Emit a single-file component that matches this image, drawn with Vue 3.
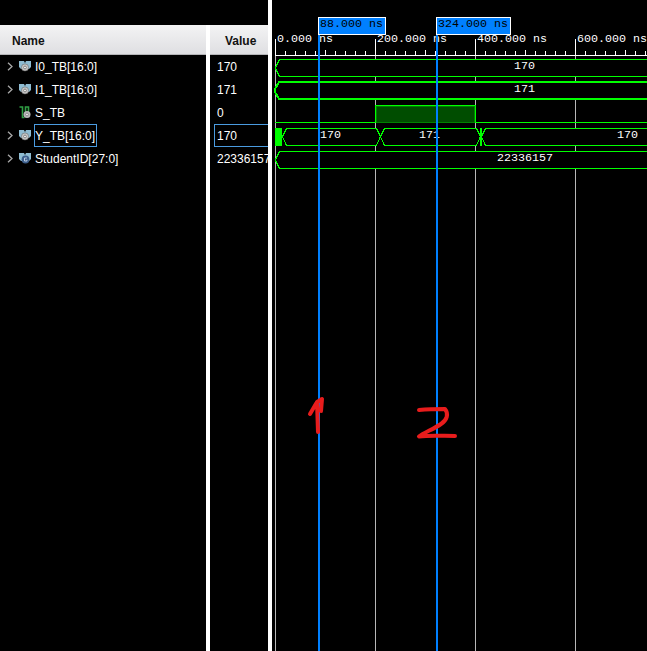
<script setup>
const signals = [
  { name: 'I0_TB[16:0]', value: '170', icon: 'bus' },
  { name: 'I1_TB[16:0]', value: '171', icon: 'bus' },
  { name: 'S_TB', value: '0', icon: 'wire' },
  { name: 'Y_TB[16:0]', value: '170', icon: 'bus', selected: true },
  { name: 'StudentID[27:0]', value: '22336157', icon: 'generic' }
]

const majors = [
  { x: 275, label: '0.000 ns' },
  { x: 375, label: '200.000 ns' },
  { x: 475, label: '400.000 ns' },
  { x: 575, label: '600.000 ns' }
]
const minors = []
for (let i = 1; i < 38; i++) {
  if (i % 10) minors.push({ x: 275 + i * 10, y: i % 5 ? 51 : 50 })
}

const values = [
  { x: 514, y: 69, text: '170' },
  { x: 514, y: 92, text: '171' },
  { x: 320, y: 138, text: '170' },
  { x: 419, y: 138, text: '171' },
  { x: 617, y: 138, text: '170' },
  { x: 497, y: 161, text: '22336157' }
]

const cursors = [
  { x: 318, w: 67, label: '88.000 ns' },
  { x: 436, w: 74, label: '324.000 ns' }
]
</script>

<template>
  <div class="viewer">
    <section class="column names">
      <header class="head">Name</header>
      <div v-for="s in signals" :key="s.name" class="row">
        <svg class="chevron" width="6" height="9" viewBox="0 0 6 9">
          <path v-if="s.icon !== 'wire'" d="M1 0.7L5 4.5L1 8.3" />
        </svg>
        <svg v-if="s.icon === 'wire'" class="icon" width="13" height="13" viewBox="0 0 13 13">
          <path class="wire" d="M0.5 1H3.5V11.5H5.5M6.5 8V1H9.5V6" />
          <circle cx="8" cy="8.5" r="3.5" fill="#b8b8b8" />
          <circle cx="8" cy="8.5" r="1.4" fill="#eee" stroke="#777" stroke-width="0.8" />
        </svg>
        <svg v-else class="icon" width="13" height="13" viewBox="0 0 13 13">
          <path d="M0 1H5L6 3L7 1H12V7L10 9H2L0 7Z" fill="#8fbcd2" />
          <template v-if="s.icon === 'bus'">
            <circle cx="6" cy="7.5" r="3.6" fill="#c8c8c8" stroke="#555" stroke-width="0.5" />
            <circle cx="6" cy="7.5" r="1.4" fill="#f2f2f2" stroke="#777" stroke-width="0.9" />
          </template>
          <template v-else>
            <circle cx="6.5" cy="7.5" r="3.9" fill="#3d5f8c" />
            <path d="M7.9 6H5.5V9H7.9V7.7" fill="none" stroke="#c8d8ec" stroke-width="0.9" />
          </template>
        </svg>
        <span class="label" :class="{ selected: s.selected }">{{ s.name }}</span>
      </div>
    </section>
    <div class="divider short"></div>
    <section class="column values">
      <header class="head">Value</header>
      <div v-for="s in signals" :key="s.name" class="row">
        <span class="value" :class="{ selected: s.selected }">{{ s.value }}</span>
      </div>
    </section>
    <div class="divider"></div>
    <svg class="wave" width="375" height="651" viewBox="272 0 375 651">
      <g shape-rendering="crispEdges">
        <rect v-for="m in majors" :key="m.x" :x="m.x" y="56" width="1" height="595" fill="#b8b8b8" />
        <rect x="275" y="55" width="372" height="1" fill="#fff" />
        <rect v-for="m in majors" :key="m.label" :x="m.x" y="39" width="1" height="17" fill="#fff" />
        <rect v-for="t in minors" :key="t.x" :x="t.x" :y="t.y" width="1" :height="55 - t.y" fill="#fff" />
        <g class="bus">
          <path d="M660 59.5H279.5L275.5 67.5V68.5L279.5 76.5H660" />
          <path class="thick" d="M660 82H279L275 89V92L279 99H660" />
          <path d="M282.5 136.5L286.5 128.5H376.5L380.5 136.5L376.5 145.5H286.5Z" />
          <path d="M380.5 136.5L384.5 128.5H476.5L480.5 136.5L476.5 145.5H384.5Z" />
          <path d="M660 128.5H485.5L481.5 136.5L485.5 145.5H660" />
          <path d="M660 151.5H279.5L275.5 159.5V160.5L279.5 168.5H660" />
        </g>
        <rect x="275" y="128" width="7" height="18" fill="#0f0" />
        <rect x="480" y="128" width="2" height="18" fill="#0f0" />
        <rect x="375" y="105" width="101" height="18" fill="#008000" />
        <rect x="377" y="107" width="97" height="15" fill="#004d00" />
        <path class="line" d="M275 122.5H375.5V105.5H475.5V122.5H647" />
      </g>
      <g class="mono" fill="#fff">
        <text v-for="m in majors" :key="m.x" :x="m.x + 2" y="42">{{ m.label }}</text>
        <text v-for="v in values" :key="v.x + '-' + v.y" :x="v.x" :y="v.y">{{ v.text }}</text>
      </g>
      <g v-for="c in cursors" :key="c.x">
        <rect :x="c.x" y="34" width="2" height="617" fill="#0080ff" />
        <rect :x="c.x + 0.5" y="17.5" :width="c.w" height="16.5" fill="#0080ff" stroke="#fff" shape-rendering="crispEdges" />
        <text class="mono" :x="c.x + 2" y="27" fill="#000">{{ c.label }}</text>
      </g>
      <g class="ink">
        <path d="M310 414L317 402L318 432M317 402L322 399L321 411" />
        <path d="M419 410C430 409 440 409 445 409C449 414 447 420 441 424C434 429 423 433 419 436.5C430 435 443 436 455 436" />
      </g>
    </svg>
  </div>
</template>

<style>
body {
  background: #000;
}
</style>

<style scoped>
.viewer {
  display: flex;
  width: 647px;
  height: 651px;
  overflow: hidden;
  background: #000;
  font: 12px/23px "Liberation Sans", Arial, sans-serif;
  color: #fff;
}
.column {
  flex: none;
  padding-top: 25px;
  box-sizing: border-box;
  overflow: hidden;
}
.names {
  width: 206px;
}
.values {
  width: 58px;
}
.head {
  box-sizing: border-box;
  height: 30px;
  padding-left: 12px;
  border-bottom: 1px solid #b5b5b8;
  background: linear-gradient(#f3f3f4, #dfdfe2);
  color: #111;
  font-weight: bold;
  line-height: 33px;
}
.values .head {
  padding-left: 15px;
}
.row {
  display: flex;
  align-items: center;
  height: 23px;
  white-space: nowrap;
}
.names .row {
  padding-left: 7px;
}
.chevron {
  fill: none;
  stroke: #a8a8a8;
  stroke-width: 1.3;
}
.icon {
  margin-left: 6px;
}
.wire {
  fill: none;
  stroke: #2f9e44;
  stroke-width: 1.6;
}
.label,
.value {
  box-sizing: border-box;
  height: 23px;
  border: 1px solid transparent;
  line-height: 23px;
}
.label {
  margin-left: 2px;
  padding-right: 1px;
}
.value {
  flex: none;
  width: 70px;
  margin-left: 4px;
  padding-left: 2px;
}
.selected {
  border-color: #4a9be0;
}
.divider {
  flex: none;
  width: 4px;
  background: #fff;
}
.divider.short {
  margin-top: 25px;
}
.wave {
  flex: none;
  display: block;
}
.bus path {
  fill: #000;
  stroke: #0f0;
  stroke-width: 1;
}
.bus .thick {
  stroke-width: 2;
}
.line {
  fill: none;
  stroke: #0f0;
}
.mono {
  font: 11.67px "Liberation Mono", "Courier New", monospace;
  white-space: pre;
}
.ink {
  fill: none;
  stroke: #e81c1c;
  stroke-width: 4;
  stroke-linecap: round;
  stroke-linejoin: round;
}
</style>
